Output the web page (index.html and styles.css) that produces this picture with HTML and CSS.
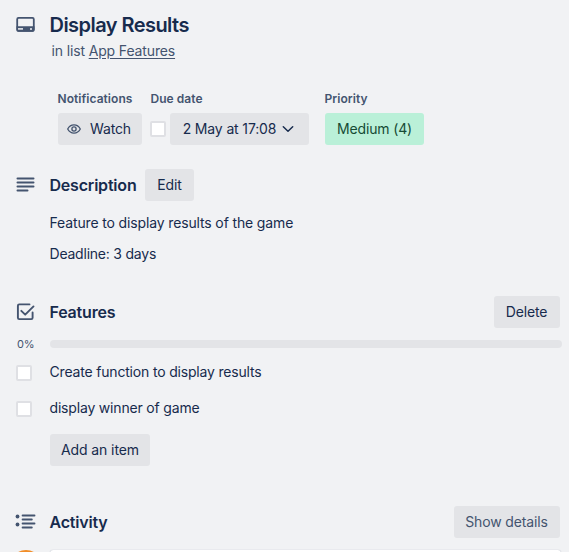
FILE: index.html
```html
<!DOCTYPE html>
<html lang="en">
<head>
<meta charset="utf-8">
<title>Display Results</title>
<link rel="stylesheet" href="styles.css">
</head>
<body>
<main class="card">
  <header class="card-header">
    <svg class="icon" width="24" height="24" viewBox="0 0 24 24" fill="none" stroke="currentColor"><rect x="4.200" y="4.900" width="16.600" height="13" rx="1.300" stroke-width="1.800"/><path d="M3.500 13.200h18V17a1.700 1.700 0 0 1-1.700 1.700H5.200A1.700 1.700 0 0 1 3.500 17z" fill="currentColor" stroke="none"/><path d="M5 15.900h5" stroke="#f1f2f4" stroke-width="1.500"/><circle cx="18" cy="15.900" r="1" fill="#f1f2f4" stroke="none"/></svg>
    <h1 class="title">Display Results</h1>
    <p class="location">in list <a class="list-link">App Features</a></p>
  </header>

  <section class="details">
    <div class="detail notifications">
      <h3 class="label">Notifications</h3>
      <button class="button watch"><svg width="16" height="16" viewBox="0 0 16 16" fill="none" stroke="#44546f" stroke-width="1.300"><path d="M1.700 8C3.200 5.200 5.400 3.900 8 3.900S12.800 5.200 14.300 8C12.800 10.800 10.600 12.100 8 12.100S3.200 10.800 1.700 8z"/><circle cx="8" cy="8" r="2.100"/></svg><span>Watch</span></button>
    </div>
    <div class="detail due">
      <h3 class="label">Due date</h3>
      <div class="due-row"><span class="checkbox"></span><button class="button date"><span>2 May at 17:08</span><svg width="12" height="8" viewBox="0 0 12 8" fill="none" stroke="currentColor" stroke-width="1.500" stroke-linecap="round" stroke-linejoin="round"><path d="M1.300 1.800 6 6.200l4.700-4.400"/></svg></button></div>
    </div>
    <div class="detail">
      <h3 class="label">Priority</h3>
      <div class="button priority">Medium (4)</div>
    </div>
  </section>

  <section class="description">
    <div class="section-head">
      <svg class="icon" width="24" height="24" viewBox="0 0 24 24" fill="none" stroke="currentColor" stroke-width="2" stroke-linecap="round"><path d="M4.500 5.500h16M4.500 9.500h16M4.500 13.500h16M4.500 17.500h10"/></svg>
      <h2 class="heading">Description</h2>
      <button class="button edit">Edit</button>
    </div>
    <p class="text">Feature to display results of the game</p>
    <p class="text deadline">Deadline: 3 days</p>
  </section>

  <section class="checklist">
    <div class="section-head">
      <svg class="icon" width="24" height="24" viewBox="0 0 24 24" fill="none" stroke="currentColor" stroke-width="1.900" stroke-linecap="round" stroke-linejoin="round"><path d="M16.500 4.400H6.200A1.300 1.300 0 0 0 4.900 5.700v12.100a1.300 1.300 0 0 0 1.300 1.300h12.100a1.300 1.300 0 0 0 1.300-1.300V12.500M8.300 10.800l3.900 3.900 8.300-8.300"/></svg>
      <h2 class="heading">Features</h2>
      <button class="button end">Delete</button>
    </div>
    <div class="progress"><span class="percent">0%</span><span class="track"></span></div>
    <div class="item"><span class="checkbox"></span><span class="item-text">Create function to display results</span></div>
    <div class="item"><span class="checkbox"></span><span class="item-text">display winner of game</span></div>
    <button class="button add">Add an item</button>
  </section>

  <section class="activity">
    <div class="section-head">
      <svg class="icon" width="24" height="24" viewBox="0 0 24 24" fill="none" stroke="currentColor" stroke-width="1.900" stroke-linecap="round"><path d="M9.600 5.500H21.500M9.600 9.500h9.200M9.600 13.500H21.500M9.600 17.500h9.200"/><g fill="currentColor" stroke="none"><circle cx="4.500" cy="6.500" r="1.900"/><circle cx="4.500" cy="14.500" r="1.900"/></g></svg>
      <h2 class="heading">Activity</h2>
      <button class="button end show">Show details</button>
    </div>
    <div class="comment"><span class="avatar"></span><div class="comment-box"></div></div>
  </section>
</main>
</body>
</html>
```
FILE: styles.css
```css
* { box-sizing: border-box; }
html, body { margin: 0; height: 100%; overflow: hidden; }
body {
  background: #f1f2f4;
  color: #172b4d;
  font: 14px/20px Inter, "Liberation Sans", sans-serif;
  letter-spacing: -0.14px;
}
h1, h2, h3, p { margin: 0; }
.card { height: 552px; overflow: hidden; padding: 13px 9px 0 0; }
.icon { color: #44546f; display: block; flex: none; margin-left: 13px; }
.card-header { display: grid; grid-template-columns: 49.5px 1fr; height: 78px; grid-template-rows: 24px 20px; row-gap: 4px; }
.title { font-size: 20px; line-height: 24px; font-weight: 600; letter-spacing: -0.55px; }
.location { grid-column: 2; padding-left: 2px; color: #44546f; }
.list-link { text-decoration: underline; text-underline-offset: 2px; }
.details { display: flex; padding-left: 58px; height: 78px; }
.label { font-size: 12px; line-height: 16px; font-weight: 600; color: #44546f; margin: 0 0 6px -0.5px; letter-spacing: 0.05px; }
.button {
  display: inline-flex; align-items: center; justify-content: center;
  height: 32px; padding: 0; border: 0; border-radius: 3px;
  background: #e3e4e7; color: #172b4d;
  font: inherit; letter-spacing: inherit; white-space: nowrap;
}
.notifications { width: 92px; }
.watch { width: 84px; gap: 8px; padding-right: 3px; }
.due { width: 175px; }
.due .label { margin-left: 0.5px; }
.due-row { display: flex; align-items: center; }
.checkbox { width: 16px; height: 16px; flex: none; background: #fff; border: 2px solid #dfe0e4; border-radius: 2px; }
.date { width: 139px; margin-left: 4px; gap: 6px; padding-right: 2px; }
.priority { display: flex; width: 99px; background: #baf0d8; color: #164b35; }
.section-head { display: flex; align-items: center; height: 32px; }
.heading { margin-left: 12.5px; font-size: 16px; font-weight: 600; letter-spacing: -0.2px; }
.description .heading { width: 87.5px; }
.edit { width: 49px; margin-left: 8px; }
.description .edit { margin-left: 8px; }
.end { width: 66px; margin-left: auto; padding-right: 1px; }
.show { width: 106px; color: #44546f; }
.description { height: 127px; }
.text { margin: 12px 0 0 49.5px; }
.deadline { margin-top: 11px; letter-spacing: -0.22px; }
.checklist { height: 210px; }
.progress { display: flex; align-items: center; height: 32px; margin-right: -2px; }
.percent { width: 50px; padding-left: 17px; font-size: 11px; color: #44546f; }
.track { flex: 1; height: 8px; border-radius: 4px; background: #e3e4e7; }
.item { display: flex; align-items: center; height: 36px; margin-top: -5px; padding-left: 16px; }
.item + .item { margin-top: 0; }
.item-text { margin: -3px 0 0 17.5px; letter-spacing: -0.18px; }
.add { display: flex; width: 100px; margin: 7px 0 0 50px; letter-spacing: -0.1px; }
.comment { display: flex; margin-top: 12px; padding-left: 10px; }
.avatar { width: 32px; height: 32px; border-radius: 50%; background: #f18d27; }
.comment-box { flex: 1; height: 38px; margin: 0 -1px 0 8px; background: #fff; border-radius: 3px; box-shadow: 0 0 1px #091e424f; }
```
